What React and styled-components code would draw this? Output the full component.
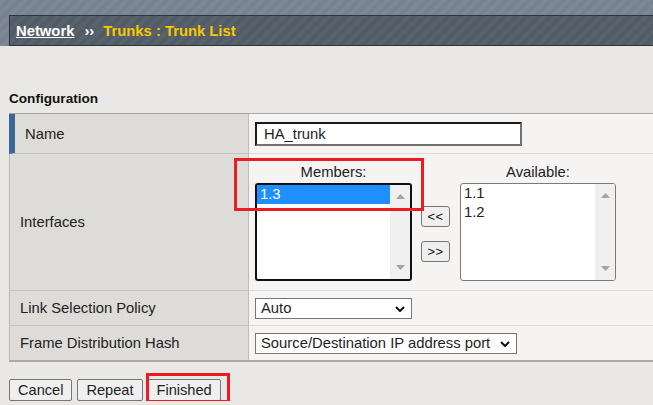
import React from 'react';
import styled, { createGlobalStyle } from 'styled-components';

const Global = createGlobalStyle`
  html, body { margin: 0; padding: 0; }
  body {
    background: #e9e8e4;
    font-family: "Liberation Sans", Arial, sans-serif;
    color: #1e1e1e;
  }
`;

const Banner = styled.div`
  height: 46px;
  box-sizing: border-box;
  padding: 15px 0 0 9px;
  background: repeating-linear-gradient(135deg, #7c8898 0 4px, #76828f 4px 8px);
`;

const Crumbs = styled.div`
  height: 31px;
  box-sizing: border-box;
  border: 1px solid #2f3439;
  border-right: none;
  background: repeating-linear-gradient(135deg, #58626d 0 4px, #525c67 4px 8px);
  display: flex;
  align-items: center;
  padding-left: 6px;
  font-weight: bold;
  font-size: 14.8px;
`;

const CrumbLink = styled.a`
  color: #fff;
  text-decoration: underline;
  text-underline-offset: 1px;
`;

const CrumbSep = styled.span`
  color: #fff;
  margin: 0 9px 0 10px;
`;

const CrumbCurrent = styled.span`
  color: #f9c800;
`;

const Title = styled.div`
  margin: 45px 0 6px 9px;
  font-size: 13.6px;
  font-weight: bold;
  line-height: 16px;
  color: #111;
`;

const Table = styled.div`
  margin-left: 9px;
  border-top: 1px solid #a6a6a6;
  border-bottom: 2px solid #ababab;
`;

const Row = styled.div`
  display: grid;
  grid-template-columns: 240px 1fr;
  height: ${p => p.$h}px;
  &:last-child > * { border-bottom: none; }
`;

const Label = styled.div`
  box-sizing: border-box;
  background: #dedcd9;
  border-left: ${p => (p.$accent ? '6px solid #3a6896' : '1px solid #b7b7b7')};
  border-right: 1px solid #bdbdbd;
  border-bottom: 1px solid #c4c4c4;
  padding-left: 10px;
  display: flex;
  align-items: center;
  font-size: 14.8px;
  color: #222;
`;

const Value = styled.div`
  position: relative;
  box-sizing: border-box;
  background: #f5f4f2;
  border-bottom: 1px solid #dcdcdc;
  padding-left: 6px;
  display: flex;
  align-items: ${p => (p.$top ? 'flex-start' : 'center')};
  padding-top: ${p => (p.$top ? '9px' : '0')};
`;

const TextInput = styled.input`
  box-sizing: border-box;
  width: 267px;
  height: 24px;
  border: 2px solid;
  border-color: #1b1b1b #727272 #727272 #1b1b1b;
  background: #fff;
  padding: 0 0 0 7px;
  font-family: inherit;
  font-size: 14.8px;
  color: #1e1e1e;
  outline: none;
`;

const Column = styled.div`
  display: flex;
  flex-direction: column;
  width: ${p => p.$w}px;
  margin-left: ${p => p.$ml || 0}px;
`;

const ListCaption = styled.div`
  text-align: center;
  font-size: 14.8px;
  line-height: 18px;
  margin-bottom: 2px;
  color: #222;
`;

const ListBox = styled.div`
  box-sizing: border-box;
  height: 98px;
  background: #fff;
  border: ${p => (p.$focused ? '2px solid #111' : '1px solid #7a7a7a')};
  border-radius: 3px;
  display: flex;
  overflow: hidden;
`;

const Options = styled.div`
  flex: 1;
  display: flex;
  flex-direction: column;
`;

const Option = styled.div`
  height: 19px;
  line-height: 19px;
  padding-left: 3px;
  font-size: 14.8px;
  background: ${p => (p.$selected ? '#1e90ff' : 'transparent')};
  color: ${p => (p.$selected ? '#fff' : '#222')};
`;

const ScrollTrack = styled.div`
  width: 20px;
  background: #f0f0f0;
  display: flex;
  flex-direction: column;
  justify-content: space-between;
  align-items: center;
  padding: 9px 0;
  box-sizing: border-box;
`;

const Movers = styled.div`
  margin: 20px 0 0 9px;
  height: 98px;
  box-sizing: border-box;
  padding-top: 3px;
  display: flex;
  flex-direction: column;
  justify-content: center;
  gap: 14px;
`;

const MoveButton = styled.button`
  box-sizing: border-box;
  width: 29px;
  height: 21px;
  padding: 0;
  border: 1px solid #767676;
  border-radius: 3px;
  background: #efefef;
  font-family: inherit;
  font-size: 13px;
  color: #111;
  letter-spacing: 0.5px;
`;

const SelectWrap = styled.div`
  position: relative;
  width: ${p => p.$w}px;
  height: 21px;
`;

const Select = styled.select`
  appearance: none;
  box-sizing: border-box;
  width: 100%;
  height: 21px;
  border: 1px solid #767676;
  border-radius: 0;
  background: #fff;
  padding: 0 0 0 5px;
  font-family: inherit;
  font-size: 14.8px;
  color: #1e1e1e;
  outline: none;
`;

const Chevron = styled.svg`
  position: absolute;
  right: 7px;
  top: 8px;
  pointer-events: none;
`;

const Actions = styled.div`
  position: relative;
  margin: 17px 0 0 9px;
  display: flex;
  align-items: flex-start;
  gap: 5px;
`;

const ActionButton = styled.button`
  box-sizing: border-box;
  height: 22px;
  padding: 0 8px;
  border: 1px solid #767676;
  border-radius: 2px;
  background: #efefef;
  font-family: inherit;
  font-size: 14.6px;
  color: #1e1e1e;
`;

const Highlight = styled.div`
  position: absolute;
  left: ${p => p.$x}px;
  top: ${p => p.$y}px;
  width: ${p => p.$w}px;
  height: ${p => p.$h}px;
  box-sizing: border-box;
  border: 3px solid #ec1c24;
  pointer-events: none;
  z-index: 2;
`;

const Arrow = ({ down }) => (
  <svg width="9" height="5" viewBox="0 0 9 5">
    <polygon points={down ? '0,0 9,0 4.5,5' : '0,5 9,5 4.5,0'} fill="#a3a3a3" />
  </svg>
);

const Scroll = () => (
  <ScrollTrack>
    <Arrow />
    <Arrow down />
  </ScrollTrack>
);

const DropDown = ({ w, value }) => (
  <SelectWrap $w={w}>
    <Select defaultValue={value}>
      <option>{value}</option>
    </Select>
    <Chevron width="10" height="6" viewBox="0 0 10 6">
      <polyline points="1,1 5,5 9,1" fill="none" stroke="#111" strokeWidth="2" />
    </Chevron>
  </SelectWrap>
);

export default function App() {
  return (
    <>
      <Global />
      <Banner>
        <Crumbs>
          <CrumbLink href="#">Network</CrumbLink>
          <CrumbSep>››</CrumbSep>
          <CrumbCurrent>Trunks : Trunk List</CrumbCurrent>
        </Crumbs>
      </Banner>
      <Title>Configuration</Title>
      <Table>
        <Row $h={40}>
          <Label $accent>Name</Label>
          <Value>
            <TextInput defaultValue="HA_trunk" />
          </Value>
        </Row>
        <Row $h={137}>
          <Label>Interfaces</Label>
          <Value $top>
            <Highlight $x={-15} $y={4} $w={190} $h={53} />
            <Column $w={157}>
              <ListCaption>Members:</ListCaption>
              <ListBox $focused>
                <Options>
                  <Option $selected>1.3</Option>
                </Options>
                <Scroll />
              </ListBox>
            </Column>
            <Movers>
              <MoveButton>&lt;&lt;</MoveButton>
              <MoveButton>&gt;&gt;</MoveButton>
            </Movers>
            <Column $w={156} $ml={10}>
              <ListCaption>Available:</ListCaption>
              <ListBox>
                <Options>
                  <Option>1.1</Option>
                  <Option>1.2</Option>
                </Options>
                <Scroll />
              </ListBox>
            </Column>
          </Value>
        </Row>
        <Row $h={35}>
          <Label>Link Selection Policy</Label>
          <Value>
            <DropDown w={157} value="Auto" />
          </Value>
        </Row>
        <Row $h={34}>
          <Label>Frame Distribution Hash</Label>
          <Value>
            <DropDown w={262} value="Source/Destination IP address port" />
          </Value>
        </Row>
      </Table>
      <Actions>
        <ActionButton>Cancel</ActionButton>
        <ActionButton>Repeat</ActionButton>
        <ActionButton>Finished</ActionButton>
        <Highlight $x={137} $y={-6} $w={84} $h={30} />
      </Actions>
    </>
  );
}
